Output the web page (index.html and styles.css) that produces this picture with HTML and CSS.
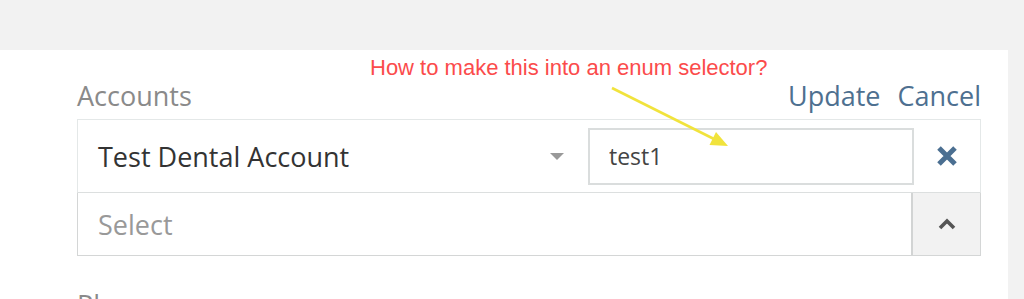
FILE: index.html
```html
<!DOCTYPE html>
<html lang="en">

<head>
    <meta charset="UTF-8">
    <meta name="viewport" content="width=device-width, initial-scale=1.0">
    <title>Accounts</title>
    <link rel="stylesheet" href="styles.css">
</head>

<body>
    <div class="panel">

        <div class="field-head">
            <h3 class="field-label">Accounts</h3>
            <div class="field-actions">
                <a href="#">Update</a>
                <a href="#">Cancel</a>
            </div>
        </div>

        <div class="entry">
            <div class="entry-name">
                <span>Test Dental Account</span>
                <i class="dropdown"></i>
            </div>
            <input class="entry-value" type="text" value="test1">
            <button class="entry-remove" title="Remove">
                <svg width="22" height="22" viewBox="0 0 22 22">
                    <path d="M3 3 L19 19 M19 3 L3 19" stroke="#4b6f91" stroke-width="5" fill="none"/>
                </svg>
            </button>
        </div>

        <div class="picker">
            <span class="picker-text">Select</span>
            <button class="picker-toggle">
                <svg width="18" height="12" viewBox="0 0 18 12">
                    <polyline points="2,10 9,3 16,10" stroke="#555" stroke-width="3.6" fill="none"/>
                </svg>
            </button>
        </div>

        <h3 class="field-label next">Phone</h3>

        <!-- annotation over the screenshot -->
        <p class="note">How to make this into an enum selector?</p>
        <svg class="note-arrow" width="140" height="80" viewBox="0 0 140 80">
            <line x1="2" y1="3" x2="104" y2="54" stroke="#f1e33c" stroke-width="2.6"/>
            <polygon points="118,61 99.5,60 106,47" fill="#f1e33c"/>
        </svg>

    </div>
</body>

</html>
```

FILE: styles.css
```css
* {
    margin: 0;
    padding: 0;
    box-sizing: border-box;
    font-family: "Open Sans", sans-serif;
}

body {
    background-color: #f2f2f2;
    overflow: hidden;
}

.panel {
    position: relative;
    margin: 50px 16px 0 0;
    padding: 30px 27px 0 77px;
    background-color: #fff;
    height: 260px;
}

.field-head {
    display: flex;
    justify-content: space-between;
    align-items: flex-end;
    margin-bottom: 7px;
}

.field-label {
    font-size: 27px;
    line-height: 32px;
    font-weight: normal;
    color: #8a8a8a;
}

.field-label.next {
    margin-top: 33px;
}

.field-actions {
    display: flex;
    gap: 17px;
}

.field-actions a {
    font-size: 27px;
    line-height: 32px;
    color: #4e7090;
    text-decoration: none;
}

.entry {
    display: flex;
    align-items: center;
    height: 74px;
    border: 1px solid #e4e8e8;
    border-bottom-color: #dcdfdf;
    padding-left: 20px;
}

.entry-name {
    flex: 1;
    display: flex;
    align-items: center;
    justify-content: space-between;
    padding-right: 24px;
    font-size: 27px;
    color: #333;
}

.dropdown {
    width: 0;
    height: 0;
    border-left: 7px solid transparent;
    border-right: 7px solid transparent;
    border-top: 7px solid #999;
}

.entry-value {
    width: 326px;
    height: 57px;
    border: 2px solid #dadddd;
    padding: 0 19px;
    font-size: 23px;
    color: #444;
    outline: none;
}

.entry-remove {
    width: 66px;
    height: 100%;
    border: 0;
    background: none;
    display: flex;
    align-items: center;
    justify-content: center;
}

.picker {
    display: flex;
    height: 63px;
    border: 1px solid #d4d6d6;
    border-top: 0;
}

.picker-text {
    flex: 1;
    display: flex;
    align-items: center;
    padding-left: 20px;
    font-size: 27px;
    color: #999;
}

.picker-toggle {
    width: 69px;
    border: 0;
    border-left: 2px solid #d2d4d4;
    background-color: #f2f2f2;
    display: flex;
    align-items: center;
    justify-content: center;
}

.note {
    position: absolute;
    left: 370px;
    top: 5px;
    font-family: "Liberation Sans", Arial, sans-serif;
    font-size: 22px;
    color: #fb4b4b;
}

.note-arrow {
    position: absolute;
    left: 610px;
    top: 35px;
}
```
